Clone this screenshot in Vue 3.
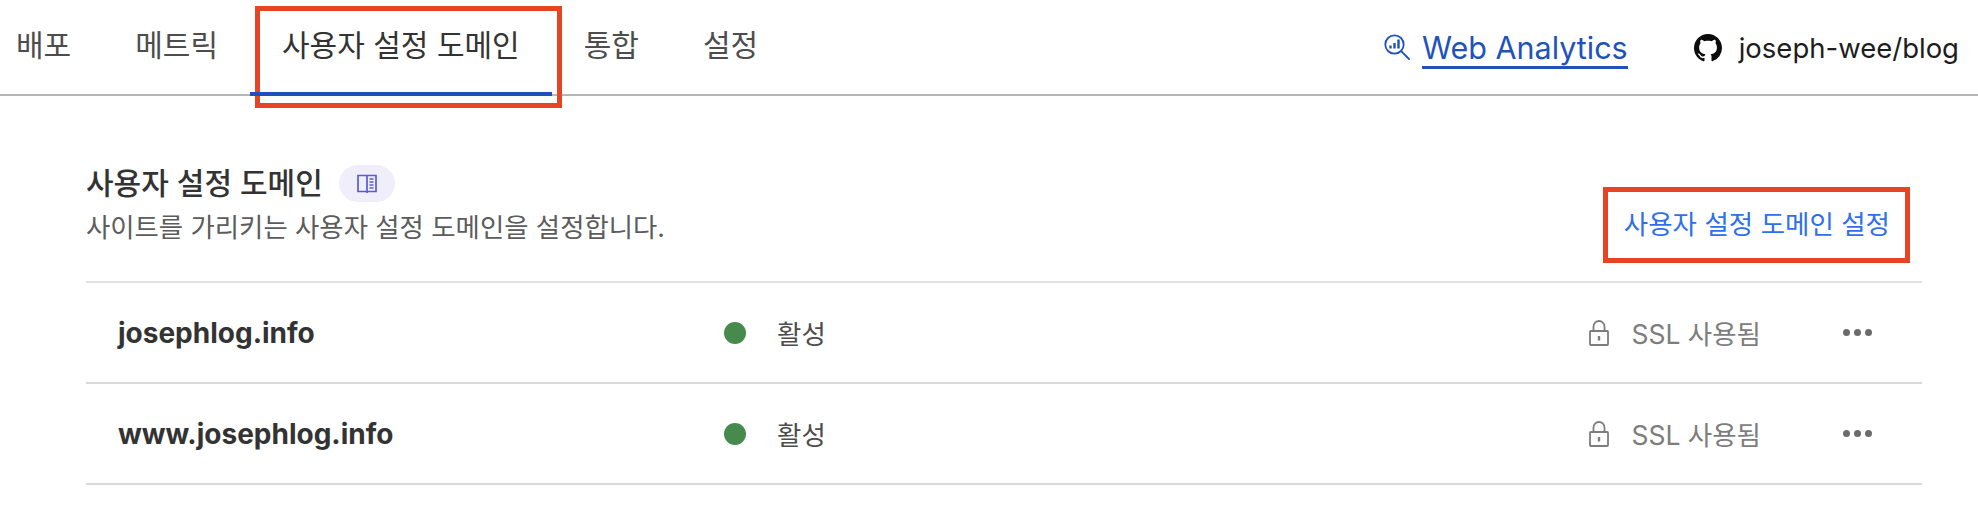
<script setup>
const tabs = [
  { label: '배포' },
  { label: '메트릭' },
  { label: '사용자 설정 도메인', active: true },
  { label: '통합' },
  { label: '설정' },
]
const domains = ['josephlog.info', 'www.josephlog.info']
</script>

<template>
  <div class="page">
    <header class="topbar">
      <nav class="tabs">
        <a v-for="t in tabs" :key="t.label" class="tab" :class="{ active: t.active }">{{ t.label }}</a>
      </nav>
      <div class="links">
        <a class="analytics">
          <svg class="an-icon" viewBox="0 0 26 26" fill="none" stroke="currentColor" stroke-width="1.8">
            <circle cx="10.5" cy="10.5" r="9.2" />
            <path d="M17.2 17.2 25 25" stroke-linecap="round" />
            <path d="M6.5 11.5v3M10.5 9v5.500M14.500 5.500v9" stroke-width="2.400" />
          </svg>
          <span class="an-text">Web Analytics</span>
        </a>
        <a class="repo">
          <svg class="gh" viewBox="0 0 16 16" fill="#0b0b0b">
            <path d="M8 0C3.580 0 0 3.580 0 8c0 3.540 2.290 6.530 5.470 7.590.4.070.55-.17.55-.38 0-.19-.01-.82-.01-1.490-2.010.37-2.530-.49-2.690-.94-.09-.23-.48-.94-.82-1.130-.28-.15-.68-.52-.01-.53.63-.01 1.080.58 1.230.82.720 1.210 1.870.87 2.330.66.070-.52.280-.87.510-1.070-1.780-.2-3.640-.89-3.640-3.950 0-.87.310-1.590.820-2.150-.08-.2-.36-1.020.08-2.120 0 0 .67-.21 2.200.82.640-.18 1.320-.27 2-.27s1.360.09 2 .27c1.530-1.040 2.200-.82 2.200-.82.440 1.100.160 1.920.080 2.120.510.560.820 1.270.820 2.150 0 3.070-1.870 3.750-3.650 3.950.290.250.540.730.540 1.480 0 1.070-.01 1.930-.01 2.200 0 .210.150.460.550.380A8.010 8.010 0 0 0 16 8c0-4.420-3.580-8-8-8z" />
          </svg>
          <span>joseph-wee/blog</span>
        </a>
      </div>
    </header>

    <section class="panel">
      <div class="panel-head">
        <div>
          <div class="title-row">
            <h2 class="title">사용자 설정 도메인</h2>
            <span class="doc-pill">
              <svg viewBox="0 0 20 20" fill="none" stroke="#5b5bd6" stroke-width="1.700">
                <path d="M10 1.500V19M10 1.500H1v16h9M10 1.500h9v16h-9" />
                <path d="M12.500 5H16.500M12.500 8H16.500M12.500 11H16.500M12.500 14H16.500" stroke-width="1.400" />
              </svg>
            </span>
          </div>
          <p class="sub">사이트를 가리키는 사용자 설정 도메인을 설정합니다.</p>
        </div>
        <a class="setup">사용자 설정 도메인 설정</a>
      </div>

      <div v-for="d in domains" :key="d" class="row">
        <div class="name">{{ d }}</div>
        <div class="status"><i class="dot"></i><span>활성</span></div>
        <div class="ssl">
          <svg class="lock" viewBox="0 0 20 26" fill="none" stroke="#7d7d7d" stroke-width="1.800">
            <rect x="1" y="11" width="18" height="14" rx="0.800" />
            <path d="M4.500 11V6.500a5.500 5.500 0 0 1 11 0V11" />
            <path d="M10 16v4.500" stroke-width="2.400" />
          </svg>
          <span>SSL 사용됨</span>
        </div>
        <div class="more"><i></i><i></i><i></i></div>
      </div>
    </section>

    <div class="mark mark-tab"></div>
    <div class="mark mark-setup"></div>
  </div>
</template>

<style>
html, body { margin: 0; background: #fff; }
</style>

<style scoped>
.page {
  position: relative;
  width: 1978px;
  height: 510px;
  overflow: hidden;
  background: #fff;
  font-family: Inter, "Noto Sans CJK KR", sans-serif;
}
.topbar {
  height: 94px;
  border-bottom: 2px solid #b6b6b6;
  display: flex;
  justify-content: space-between;
  padding: 0 19px 0 16px;
}
.tabs { display: flex; gap: 64px; }
.tab {
  position: relative;
  font-size: 30px;
  line-height: 90px;
  color: #4d4d4d;
  white-space: nowrap;
}
.tab.active { color: #333; }
.tab.active::after {
  content: "";
  position: absolute;
  z-index: 1;
  left: -32px;
  right: -32px;
  bottom: -2px;
  height: 4px;
  background: #1f4fb8;
}
.links { display: flex; align-items: flex-start; }
.analytics {
  display: flex;
  align-items: flex-start;
  gap: 12px;
  color: #1f52bd;
  margin-right: 66px;
}
.an-icon { width: 26px; height: 26px; margin-top: 34px; }
.an-text {
  font-size: 30.5px;
  line-height: 34px;
  margin-top: 31px;
  padding-bottom: 1px;
  border-bottom: 3px solid #1f52bd;
}
.repo {
  display: flex;
  align-items: flex-start;
  gap: 17px;
  font-size: 27.5px;
  line-height: 34px;
  padding-top: 31px;
  color: #1d1d1d;
}
.gh { width: 28px; height: 28px; margin-top: 3px; }
.panel { margin: 0 56px 0 86px; }
.panel-head {
  height: 187px;
  border-bottom: 2px solid #e2e2e2;
  box-sizing: border-box;
  padding: 69px 32px 0 0;
  display: flex;
  justify-content: space-between;
}
.title-row { display: flex; align-items: center; gap: 16px; height: 37px; }
.title {
  margin: 0;
  font-size: 30px;
  line-height: 37px;
  font-weight: 500;
  color: #333;
}
.doc-pill {
  width: 56px;
  height: 37px;
  border-radius: 19px;
  background: #f0eefb;
  display: flex;
  align-items: center;
  justify-content: center;
}
.doc-pill svg { width: 20px; height: 20px; }
.sub {
  margin: 8px 0 0;
  font-size: 26.400px;
  line-height: 34px;
  color: #5c5c5c;
}
.setup {
  margin-top: 42px;
  font-size: 26.500px;
  line-height: 34px;
  color: #2f6fed;
  white-space: nowrap;
}
.row {
  height: 101px;
  box-sizing: border-box;
  border-bottom: 2px solid #d9d9d9;
  display: flex;
  align-items: center;
  padding: 0 50px 0 32px;
}
.name {
  width: 606px;
  font-size: 28px;
  font-weight: 700;
  color: #333;
}
.status { display: flex; align-items: center; gap: 31px; font-size: 26.500px; color: #4d4d4d; }
.dot {
  width: 22px;
  height: 22px;
  border-radius: 50%;
  background: #468a4d;
}
.ssl {
  margin-left: auto;
  display: flex;
  align-items: center;
  gap: 22px;
  font-size: 26.500px;
  color: #7d7d7d;
}
.lock { width: 20px; height: 26px; }
.more { margin-left: 82px; display: flex; gap: 4px; }
.more i { width: 7px; height: 7px; border-radius: 50%; background: #6b6b6b; }
.mark {
  position: absolute;
  box-sizing: border-box;
  border: 5px solid #e94325;
  pointer-events: none;
}
.mark-tab { left: 255px; top: 6px; width: 307px; height: 102px; }
.mark-setup { left: 1603px; top: 187px; width: 307px; height: 76px; }
</style>
